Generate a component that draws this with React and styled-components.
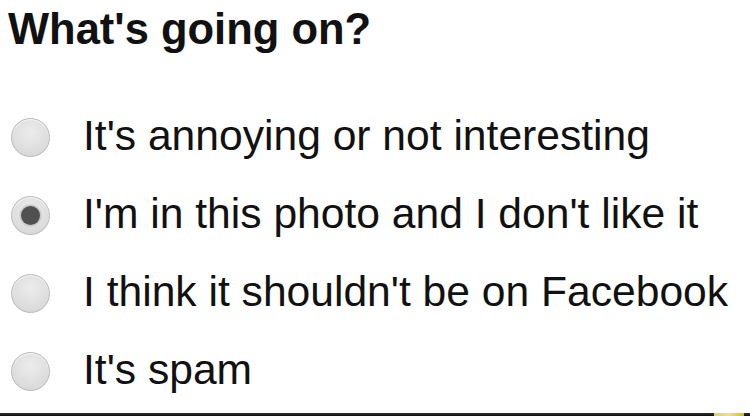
import React from "react";
import styled, { createGlobalStyle } from "styled-components";

const Global = createGlobalStyle`
  html, body { margin: 0; padding: 0; background: #fff; }
  body { font-family: "Liberation Sans", Arial, sans-serif; color: #111; }
`;

const Page = styled.div`
  width: 750px;
  height: 416px;
  display: flex;
  flex-direction: column;
  overflow: hidden;
  background: #fff;
`;

const Content = styled.div`
  flex: 1;
  padding: 4px 0 0 8px;
`;

const Heading = styled.h1`
  margin: 0;
  font-size: 43.5px;
  line-height: 50px;
  font-weight: 700;
  color: #111;
`;

const List = styled.div`
  margin-top: 42px;
  display: flex;
  flex-direction: column;
`;

const Row = styled.label`
  display: flex;
  align-items: center;
  height: 78px;
  gap: 33px;
`;

const Radio = styled.span`
  position: relative;
  box-sizing: border-box;
  margin-left: 3px;
  margin-top: 5px;
  width: 39px;
  height: 39px;
  border-radius: 50%;
  border: 1.5px solid #b8b8b8;
  background: radial-gradient(circle at 50% 35%, #ececec 0%, #dedede 60%, #d2d2d2 100%);
  box-shadow: inset 0 1px 1px rgba(255, 255, 255, 0.8);
  flex: none;
  &::after {
    content: "";
    display: ${(p) => (p.checked ? "block" : "none")};
    position: absolute;
    left: 50%;
    top: 50%;
    width: 19px;
    height: 19px;
    margin: -9.5px 0 0 -9.5px;
    border-radius: 50%;
    background: #505050;
    box-shadow: 0 0 0 1.5px #c8c8c8;
  }
`;

const OptionText = styled.span`
  font-size: 42.6px;
  line-height: 78px;
  color: #111;
  white-space: nowrap;
`;

const Footer = styled.div`
  height: 3px;
  background: linear-gradient(to bottom, #333, #111);
  display: flex;
  justify-content: flex-end;
  padding-right: 6px;
`;

const Mark = styled.span`
  width: 30px;
  height: 3px;
  background: linear-gradient(to right, #d8cf80, #f2e27a, #c9b94a);
`;

const options = [
  { label: "It's annoying or not interesting", checked: false },
  { label: "I'm in this photo and I don't like it", checked: true },
  { label: "I think it shouldn't be on Facebook", checked: false },
  { label: "It's spam", checked: false },
];

export default function App() {
  return (
    <Page>
      <Global />
      <Content>
        <Heading>What's going on?</Heading>
        <List>
          {options.map((o) => (
            <Row key={o.label}>
              <Radio checked={o.checked} />
              <OptionText>{o.label}</OptionText>
            </Row>
          ))}
        </List>
      </Content>
      <Footer>
        <Mark />
      </Footer>
    </Page>
  );
}
